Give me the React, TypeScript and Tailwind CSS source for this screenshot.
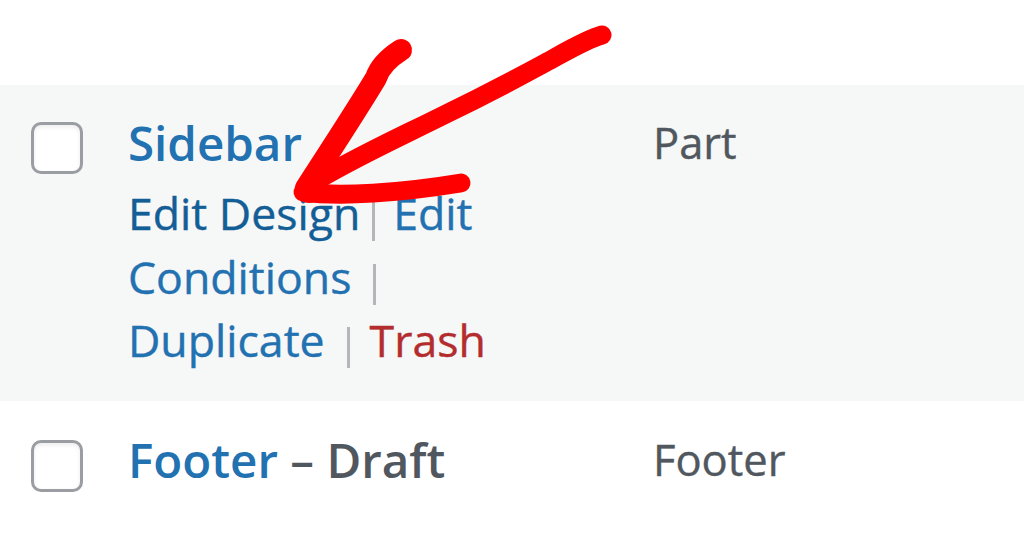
import React from "react"

function Checkbox({ className = "" }: { className?: string }) {
  return (
    <div
      className={`w-[52px] h-[52px] rounded-[10px] border-[3px] border-[#9a9da1] bg-white shadow-[inset_0_2px_4px_rgba(0,0,0,0.08)] ${className}`}
    />
  )
}

function Sep({ className = "" }: { className?: string }) {
  return <span className={`inline-block w-[3px] h-[41px] bg-[#b4b6b9] align-[-11px] ${className}`} />
}

export default function App() {
  return (
    <div className="relative w-[1024px] h-[541px] overflow-hidden bg-white font-['Open_Sans',sans-serif]">
      <div className="h-[85px]" />

      {/* highlighted row */}
      <div className="flex h-[316px] bg-[#f6f7f7]">
        <div className="w-[128px] shrink-0 pl-[31px] pt-[37px]">
          <Checkbox />
        </div>
        <div className="w-[525px] shrink-0 pt-[26px]">
          <div className="text-[47.5px] leading-[64px] font-semibold text-[#2271b1]">Sidebar</div>
          <div className="mt-[6px] text-[44.6px] leading-[63.5px] [-webkit-text-stroke:0.4px_currentColor] text-[#2271b1] whitespace-nowrap">
            <div>
              <span className="text-[#135e96]">Edit Design</span>
              <Sep className="ml-[12px] mr-[18px]" />
              <span>Edit</span>
            </div>
            <div>
              <span>Conditions</span>
              <Sep className="ml-[22px]" />
            </div>
            <div>
              <span>Duplicate</span>
              <Sep className="ml-[22px] mr-[20px]" />
              <span className="text-[#b32d2e]">Trash</span>
            </div>
          </div>
        </div>
        <div className="pt-[26px] text-[43.5px] leading-[64px] [-webkit-text-stroke:0.4px_currentColor] text-[#50575e]">Part</div>
      </div>

      {/* next row */}
      <div className="flex h-[140px] bg-white">
        <div className="w-[128px] shrink-0 pl-[31px] pt-[39px]">
          <Checkbox />
        </div>
        <div className="w-[525px] shrink-0 pt-[27px]">
          <div className="text-[47.5px] leading-[64px] font-semibold whitespace-nowrap">
            <span className="text-[#2271b1]">Footer</span>
            <span className="text-[#50575e]"> – Draft</span>
          </div>
        </div>
        <div className="pt-[27px] text-[43.5px] leading-[64px] [-webkit-text-stroke:0.4px_currentColor] text-[#50575e]">Footer</div>
      </div>

      {/* hand-drawn arrow */}
      <svg
        className="absolute inset-0 pointer-events-none"
        width="1024"
        height="541"
        viewBox="0 0 1024 541"
        fill="none"
        stroke="#ff0000"
        strokeLinecap="round"
        strokeLinejoin="round"
      >
        <path d="M602 35 C587 39 567 51 545 63 C510 82 475 100 440 117 C400 137 345 162 306 187" strokeWidth="19" />
        <path d="M401 50 C390 57 380 66 376 78 C358 108 332 148 306 188" strokeWidth="22" />
        <path d="M303 192 C340 197 400 193 461 183" strokeWidth="19" />
        <circle cx="309" cy="191" r="12" fill="#ff0000" stroke="none" />
      </svg>
    </div>
  )
}
